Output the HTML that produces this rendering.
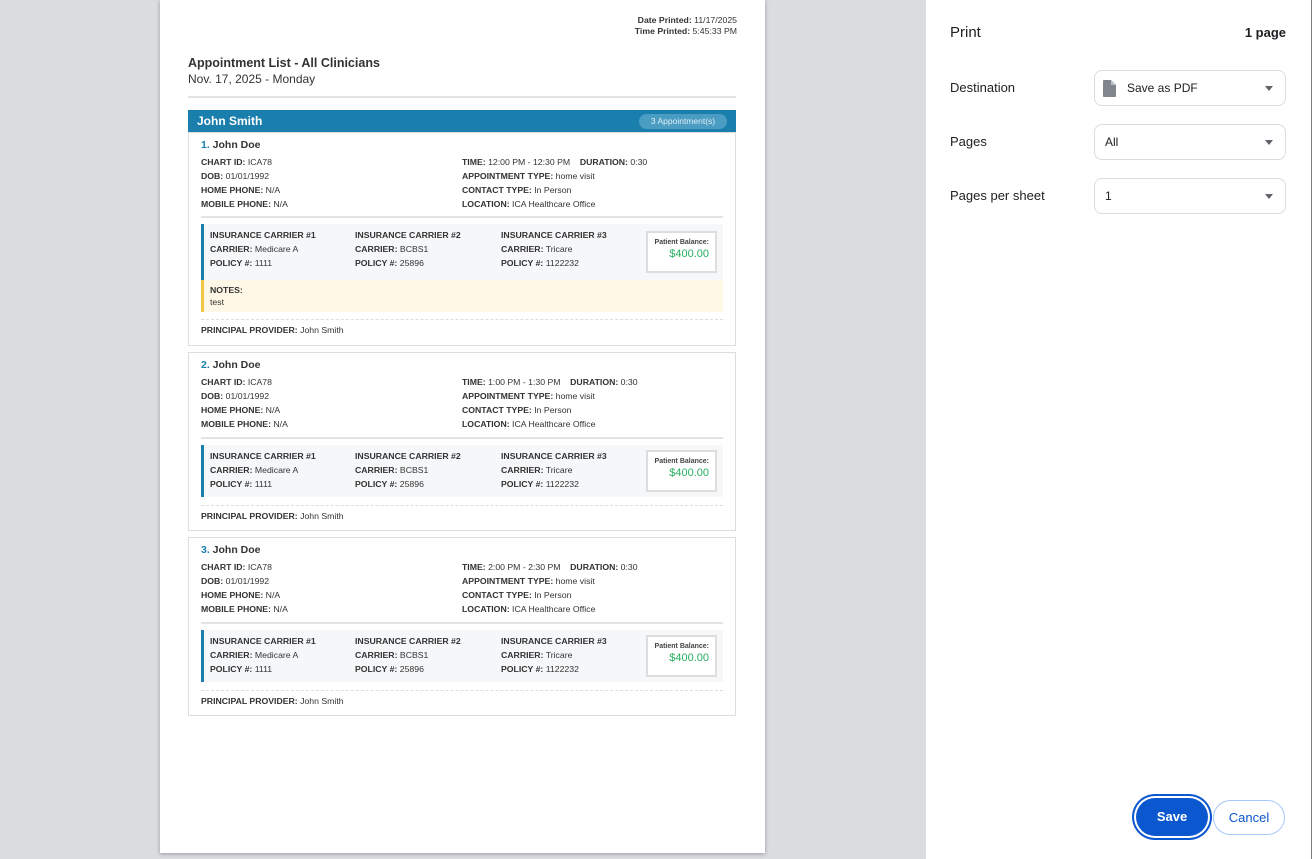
<!DOCTYPE html>
<html><head><meta charset="utf-8"><style>
*{margin:0;padding:0;box-sizing:border-box}
body{width:1312px;height:859px;overflow:hidden;background:#dadce0;font-family:"Liberation Sans",sans-serif;position:relative;color:#333}
.page{position:absolute;left:160px;top:0;width:605px;height:853px;background:#fff;box-shadow:0 1px 4px rgba(0,0,0,.3)}
.a{position:absolute;white-space:nowrap}
.s{font-size:8.7px;line-height:11px;color:#333}
b{font-weight:bold;color:#333}
.card{position:absolute;left:28px;width:548px;border:1px solid #ddd;background:#fff}
.ins{position:absolute;left:12px;width:522px;background:#f6f7f9;border-left:3px solid #1a7fad}
.bal{position:absolute;right:6px;top:7px;width:71px;height:42px;border:2px solid #ddd;background:#fff;text-align:right;padding:6px 6px 0 0}
.panel{position:absolute;left:926px;top:0;width:386px;height:859px;background:#fff}
.lbl{position:absolute;left:24px;font-size:13px;color:#202124}
.sel{position:absolute;left:168px;width:192px;height:36px;border:1px solid #dadce0;border-radius:8px;font-size:12px;color:#202124;padding:0 0 0 10px;line-height:34px}
.sel:after{content:"";position:absolute;right:12px;top:15px;border:4px solid transparent;border-top:5px solid #5f6368;border-bottom:0}
</style></head><body>
<div class="page">
  <div class="a s" style="right:28px;top:15px;text-align:right"><b>Date Printed:</b> 11/17/2025<br><b>Time Printed:</b> 5:45:33 PM</div>
  <div class="a" style="left:28px;top:56px;font-size:12.5px;font-weight:bold;color:#333">Appointment List - All Clinicians</div>
  <div class="a" style="left:28px;top:72px;font-size:12px;color:#333">Nov. 17, 2025 - Monday</div>
  <div class="a" style="left:28px;top:96px;width:548px;height:2px;background:#e4e4e4"></div>
  <div class="a" style="left:28px;top:110px;width:548px;height:22px;background:#1a7fad">
    <div class="a" style="left:9px;top:4px;font-size:12px;font-weight:bold;color:#fff">John Smith</div>
    <div class="a" style="right:9px;top:4px;height:15px;width:88px;border-radius:8px;background:#4b9cc2;color:#e0eef5;font-size:8.5px;line-height:15px;text-align:center">3 Appointment(s)</div>
  </div>

  <!-- card 1 -->
  <div class="card" style="top:132px;height:214px">
    <div class="a" style="left:12px;top:6px;font-size:10.5px;font-weight:bold"><span style="color:#1a7fad">1.</span> John Doe</div>
    <div class="a s" style="left:12px;top:22px;line-height:14px"><b>CHART ID:</b> ICA78<br><b>DOB:</b> 01/01/1992<br><b>HOME PHONE:</b> N/A<br><b>MOBILE PHONE:</b> N/A</div>
    <div class="a s" style="left:273px;top:22px;line-height:14px"><b>TIME:</b> 12:00 PM - 12:30 PM &nbsp;&nbsp;&nbsp;<b>DURATION:</b> 0:30<br><b>APPOINTMENT TYPE:</b> home visit<br><b>CONTACT TYPE:</b> In Person<br><b>LOCATION:</b> ICA Healthcare Office</div>
    <div class="a" style="left:12px;top:83px;width:522px;height:2px;background:#e4e4e4"></div>
    <div class="ins" style="top:91px;height:56px">
      <div class="a s" style="left:6px;top:4px;line-height:14px"><b>INSURANCE CARRIER #1</b><br><b>CARRIER:</b> Medicare A<br><b>POLICY #:</b> 1111</div>
      <div class="a s" style="left:151px;top:4px;line-height:14px"><b>INSURANCE CARRIER #2</b><br><b>CARRIER:</b> BCBS1<br><b>POLICY #:</b> 25896</div>
      <div class="a s" style="left:297px;top:4px;line-height:14px"><b>INSURANCE CARRIER #3</b><br><b>CARRIER:</b> Tricare<br><b>POLICY #:</b> 1122232</div>
      <div class="bal"><div style="font-size:7px;font-weight:bold;color:#444">Patient Balance:</div><div style="font-size:11px;color:#27ae60;margin-top:2px">$400.00</div></div>
    </div>
    <div class="a" style="left:12px;top:147px;width:522px;height:32px;background:#fff8e6;border-left:3px solid #f5c842">
      <div class="a s" style="left:6px;top:4px;line-height:12px"><b>NOTES:</b><br>test</div>
    </div>
    <div class="a" style="left:12px;top:186px;width:522px;border-top:1px dashed #ddd"></div>
    <div class="a s" style="left:12px;top:192px"><b>PRINCIPAL PROVIDER:</b> John Smith</div>
  </div>

  <!-- card 2 -->
  <div class="card" style="top:352px;height:179px">
    <div class="a" style="left:12px;top:6px;font-size:10.5px;font-weight:bold"><span style="color:#1a7fad">2.</span> John Doe</div>
    <div class="a s" style="left:12px;top:22px;line-height:14px"><b>CHART ID:</b> ICA78<br><b>DOB:</b> 01/01/1992<br><b>HOME PHONE:</b> N/A<br><b>MOBILE PHONE:</b> N/A</div>
    <div class="a s" style="left:273px;top:22px;line-height:14px"><b>TIME:</b> 1:00 PM - 1:30 PM &nbsp;&nbsp;&nbsp;<b>DURATION:</b> 0:30<br><b>APPOINTMENT TYPE:</b> home visit<br><b>CONTACT TYPE:</b> In Person<br><b>LOCATION:</b> ICA Healthcare Office</div>
    <div class="a" style="left:12px;top:84px;width:522px;height:2px;background:#e4e4e4"></div>
    <div class="ins" style="top:92px;height:52px">
      <div class="a s" style="left:6px;top:4px;line-height:14px"><b>INSURANCE CARRIER #1</b><br><b>CARRIER:</b> Medicare A<br><b>POLICY #:</b> 1111</div>
      <div class="a s" style="left:151px;top:4px;line-height:14px"><b>INSURANCE CARRIER #2</b><br><b>CARRIER:</b> BCBS1<br><b>POLICY #:</b> 25896</div>
      <div class="a s" style="left:297px;top:4px;line-height:14px"><b>INSURANCE CARRIER #3</b><br><b>CARRIER:</b> Tricare<br><b>POLICY #:</b> 1122232</div>
      <div class="bal" style="top:5px"><div style="font-size:7px;font-weight:bold;color:#444">Patient Balance:</div><div style="font-size:11px;color:#27ae60;margin-top:2px">$400.00</div></div>
    </div>
    <div class="a" style="left:12px;top:152px;width:522px;border-top:1px dashed #ddd"></div>
    <div class="a s" style="left:12px;top:158px"><b>PRINCIPAL PROVIDER:</b> John Smith</div>
  </div>

  <!-- card 3 -->
  <div class="card" style="top:537px;height:179px">
    <div class="a" style="left:12px;top:6px;font-size:10.5px;font-weight:bold"><span style="color:#1a7fad">3.</span> John Doe</div>
    <div class="a s" style="left:12px;top:22px;line-height:14px"><b>CHART ID:</b> ICA78<br><b>DOB:</b> 01/01/1992<br><b>HOME PHONE:</b> N/A<br><b>MOBILE PHONE:</b> N/A</div>
    <div class="a s" style="left:273px;top:22px;line-height:14px"><b>TIME:</b> 2:00 PM - 2:30 PM &nbsp;&nbsp;&nbsp;<b>DURATION:</b> 0:30<br><b>APPOINTMENT TYPE:</b> home visit<br><b>CONTACT TYPE:</b> In Person<br><b>LOCATION:</b> ICA Healthcare Office</div>
    <div class="a" style="left:12px;top:84px;width:522px;height:2px;background:#e4e4e4"></div>
    <div class="ins" style="top:92px;height:52px">
      <div class="a s" style="left:6px;top:4px;line-height:14px"><b>INSURANCE CARRIER #1</b><br><b>CARRIER:</b> Medicare A<br><b>POLICY #:</b> 1111</div>
      <div class="a s" style="left:151px;top:4px;line-height:14px"><b>INSURANCE CARRIER #2</b><br><b>CARRIER:</b> BCBS1<br><b>POLICY #:</b> 25896</div>
      <div class="a s" style="left:297px;top:4px;line-height:14px"><b>INSURANCE CARRIER #3</b><br><b>CARRIER:</b> Tricare<br><b>POLICY #:</b> 1122232</div>
      <div class="bal" style="top:5px"><div style="font-size:7px;font-weight:bold;color:#444">Patient Balance:</div><div style="font-size:11px;color:#27ae60;margin-top:2px">$400.00</div></div>
    </div>
    <div class="a" style="left:12px;top:152px;width:522px;border-top:1px dashed #ddd"></div>
    <div class="a s" style="left:12px;top:158px"><b>PRINCIPAL PROVIDER:</b> John Smith</div>
  </div>
</div>

<div class="panel">
  <div class="a" style="left:24px;top:24px;font-size:15px;color:#202124">Print</div>
  <div class="a" style="right:26px;top:25px;font-size:13px;font-weight:bold;color:#202124">1 page</div>
  <div class="lbl" style="top:80px">Destination</div>
  <div class="sel" style="top:70px;padding-left:32px">
    <svg class="a" style="left:8px;top:9px" width="13" height="17" viewBox="0 0 13 17"><path d="M1 0h7l5 5v11a1 1 0 0 1-1 1H1a1 1 0 0 1-1-1V1a1 1 0 0 1 1-1z" fill="#80868b"/><path d="M8 0v5h5" fill="#bdc1c6"/></svg>
    Save as PDF</div>
  <div class="lbl" style="top:134px">Pages</div>
  <div class="sel" style="top:124px">All</div>
  <div class="lbl" style="top:188px">Pages per sheet</div>
  <div class="sel" style="top:178px">1</div>
  <div class="a" style="left:210px;top:798px;width:72px;height:38px;border-radius:19px;background:#0b57d0;box-shadow:0 0 0 2px #fff,0 0 0 4px #0b57d0;color:#fff;font-size:13px;font-weight:bold;text-align:center;line-height:38px">Save</div>
  <div class="a" style="left:287px;top:800px;width:72px;height:35px;border-radius:18px;border:1px solid #a8c7fa;color:#0b57d0;font-size:13px;text-align:center;line-height:33px">Cancel</div>
  <div class="a" style="left:385px;top:0;width:1px;height:859px;background:#7a7d78"></div>
</div>
</body></html>
